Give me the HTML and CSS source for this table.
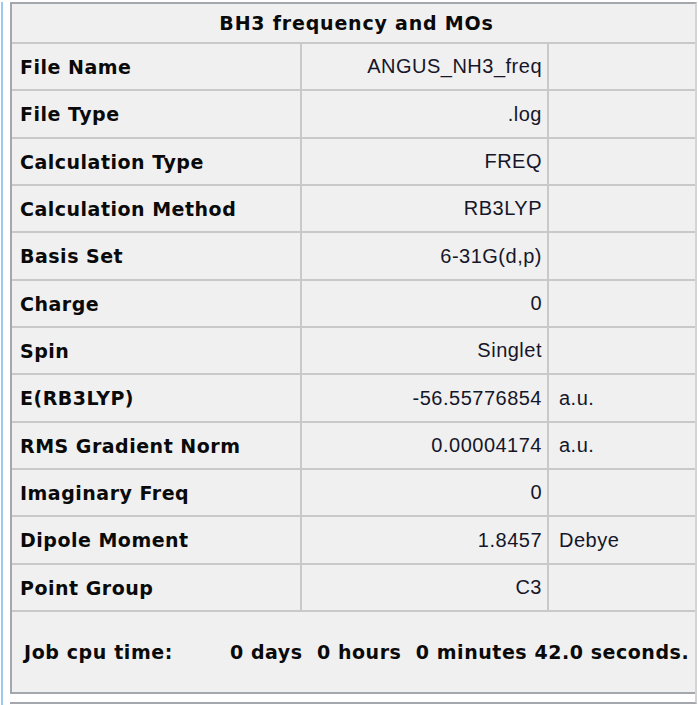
FILE: index.html
```html
<!DOCTYPE html>
<html>
<head>
<meta charset="utf-8">
<link rel="stylesheet" href="styles.css">
</head>
<body>
<div class="window">
  <div class="panel">
    <div class="title">BH3 frequency and MOs</div>
    <div class="row"><div class="lbl">File Name</div><div class="val">ANGUS_NH3_freq</div><div class="unit"></div></div>
    <div class="row"><div class="lbl">File Type</div><div class="val">.log</div><div class="unit"></div></div>
    <div class="row"><div class="lbl">Calculation Type</div><div class="val">FREQ</div><div class="unit"></div></div>
    <div class="row"><div class="lbl">Calculation Method</div><div class="val">RB3LYP</div><div class="unit"></div></div>
    <div class="row"><div class="lbl">Basis Set</div><div class="val">6-31G(d,p)</div><div class="unit"></div></div>
    <div class="row"><div class="lbl">Charge</div><div class="val">0</div><div class="unit"></div></div>
    <div class="row"><div class="lbl">Spin</div><div class="val">Singlet</div><div class="unit"></div></div>
    <div class="row"><div class="lbl">E(RB3LYP)</div><div class="val">-56.55776854</div><div class="unit">a.u.</div></div>
    <div class="row"><div class="lbl">RMS Gradient Norm</div><div class="val">0.00004174</div><div class="unit">a.u.</div></div>
    <div class="row"><div class="lbl">Imaginary Freq</div><div class="val">0</div><div class="unit"></div></div>
    <div class="row"><div class="lbl">Dipole Moment</div><div class="val">1.8457</div><div class="unit">Debye</div></div>
    <div class="row"><div class="lbl">Point Group</div><div class="val">C3</div><div class="unit"></div></div>
    <div class="cpu">
      <span class="cpu-lbl">Job cpu time:</span>
      <span class="cpu-val">0 days&nbsp; 0 hours&nbsp; 0 minutes 42.0 seconds.</span>
    </div>
  </div>
  <div class="footer"></div>
</div>
</body>
</html>
```
FILE: styles.css
```css
html, body {
  margin: 0;
  padding: 0;
  background: #ffffff;
}
body {
  width: 698px;
  height: 705px;
  overflow: hidden;
  font-family: "Liberation Sans", Arial, sans-serif;
  color: #0a0a0a;
}
.window {
  margin: 2px 0 0 1px;
  border-left: 2px solid #9cc8ee;
  padding-left: 7px;
  height: 703px;
  box-sizing: border-box;
}
.panel {
  border-top: 2px solid #a4a8ad;
  border-left: 2px solid #a4a8ad;
  border-right: 2px solid #d4d4d4;
  background: #f0f0f0;
  width: 687px;
  box-sizing: border-box;
}
.title {
  height: 38px;
  border-bottom: 2px solid #c9c9c9;
  display: flex;
  align-items: center;
  justify-content: center;
  padding-left: 6px;
  font-family: "DejaVu Sans", Verdana, sans-serif;
  font-size: 19px;
  font-weight: bold;
  letter-spacing: 0.8px;
}
.row {
  display: grid;
  grid-template-columns: 290px 247px 1fr;
  height: 47px;
  box-sizing: border-box;
  border-bottom: 2px solid #c9c9c9;
  font-size: 20px;
  white-space: nowrap;
}
.row:nth-of-type(3n) {
  height: 48px;
}
.row > div {
  display: flex;
  align-items: center;
}
.lbl {
  font-family: "DejaVu Sans", Verdana, sans-serif;
  font-size: 19px;
  font-weight: bold;
  letter-spacing: 0.5px;
  padding-left: 8px;
  border-right: 2px solid #c9c9c9;
}
.val {
  justify-content: flex-end;
  padding-right: 5px;
  letter-spacing: 0.5px;
  color: #16162a;
  border-right: 2px solid #c9c9c9;
}
.unit {
  padding-left: 10px;
  letter-spacing: 0.5px;
  color: #16162a;
}
.cpu {
  height: 80px;
  display: flex;
  align-items: center;
  font-family: "DejaVu Sans", Verdana, sans-serif;
  font-size: 19px;
  font-weight: bold;
  padding-left: 12px;
  border-bottom: 2px solid #a4a8ad;
  white-space: nowrap;
}
.cpu-lbl { width: 206px; flex: none; letter-spacing: 0.6px; }
.cpu-val { letter-spacing: 0.55px; }
.footer {
  height: 10px;
  border-bottom: 2px solid #a4a8ad;
  border-right: 2px solid #d4d4d4;
  width: 687px;
  box-sizing: border-box;
  background: #fff;
}
```
